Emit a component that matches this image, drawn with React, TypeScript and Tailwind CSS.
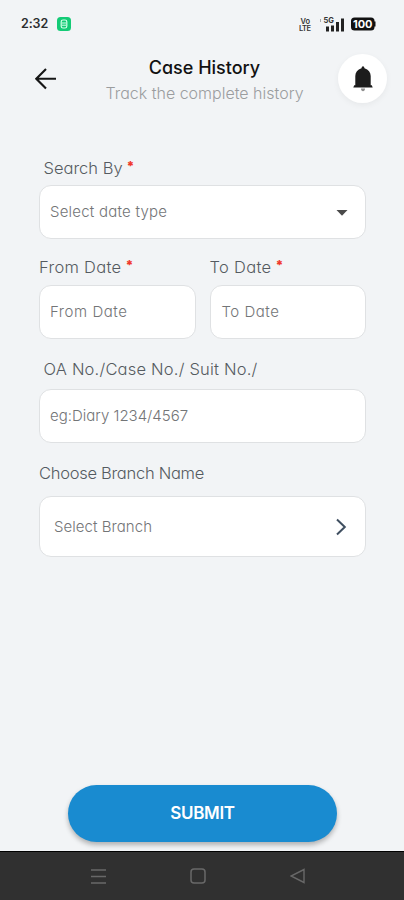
import type { ReactNode } from "react";

function Label({ children, className = "", required }: { children: ReactNode; className?: string; required?: boolean }) {
  return (
    <div className={`flex h-6 text-[16.5px] leading-6 font-[350] whitespace-nowrap text-[#555b61] ${className}`}>
      {children}
      {required && <span className="ml-[4px] text-[13px] leading-[21px] font-black tracking-normal text-[#f03a2e]">*</span>}
    </div>
  );
}

function Field({ children, className = "" }: { children: ReactNode; className?: string }) {
  return (
    <div
      className={`flex items-center justify-between rounded-xl border border-[#dfe1e3] bg-white pt-px text-[15px] font-light whitespace-nowrap text-[#737577] ${className}`}
    >
      {children}
    </div>
  );
}

function StatusBar() {
  return (
    <div className="flex h-12 shrink-0 items-center pl-[21px] pr-[28px]">
      <span className="text-[12.5px] font-semibold tracking-[-0.1px] text-[#2b2d2f]">2:32</span>
      <svg className="ml-[9px]" width="14" height="14" viewBox="0 0 14 14" fill="none">
        <rect width="14" height="14" rx="3.5" fill="#14cb76" />
        <rect x="4.2" y="3" width="5.6" height="8" rx="1.8" stroke="#d5ffe9" strokeWidth="1.2" />
        <path d="M5 6h4M5 8.2h4" stroke="#d5ffe9" strokeWidth="1" />
      </svg>
      <div className="ml-auto flex items-center">
        <svg className="mr-[8px]" width="13" height="15" viewBox="0 0 13 15" fill="#333" fontWeight="600">
          <text x="1.5" y="6.5" fontSize="7.5">Vo</text>
          <text x="0" y="14" fontSize="7.5" textLength="12">LTE</text>
        </svg>
        <svg className="mr-[6px]" width="25" height="15" viewBox="0 0 25 15">
          <path d="M0 2h1v3H0z" fill="#aaa" />
          <text x="3.5" y="6" fontSize="7.5" fontWeight="700" fill="#333">5G</text>
          <path d="M6 9.5h3v5H6zM11 8.5h3v6h-3zM16 5h3v9.500h-3zM21 1.500h3v13h-3z" fill="#222" />
        </svg>
        <svg width="25" height="14" viewBox="0 0 25 14">
          <rect y="0.5" width="23.5" height="13" rx="3.5" fill="#111" />
          <path d="M23 4.500h1.500v5H23z" fill="#111" />
          <text x="2" y="11" fontSize="11" fontWeight="700" fill="#fff" textLength="19.5">100</text>
        </svg>
      </div>
    </div>
  );
}

function Header() {
  return (
    <header className="flex h-[62px] shrink-0 items-start pl-[35px] pr-[17px]">
      <svg className="mt-[20px]" width="22" height="22" viewBox="0 0 22 22" fill="none" stroke="#161616" strokeWidth="2.1">
        <path d="M21 10.8H1.5M11 1L1.3 10.8L11 20.5" />
      </svg>
      <div className="flex-1 pt-[8px] pl-[14px] text-center whitespace-nowrap">
        <h1 className="text-[18px] leading-6 font-medium text-[#111]">Case History</h1>
        <p className="mt-px text-[16px] leading-6 font-light text-[#9b9d9f]">Track the complete history</p>
      </div>
      <div className="mt-[6px] flex size-[49px] items-center justify-center rounded-full bg-white shadow-[0_2px_6px_rgba(0,0,0,0.05)]">
        <svg width="22" height="26" viewBox="0 0 22 26" fill="#1c1c1c">
          <path d="M11 .3c.8 0 1.300.700 1.500 2C16.500 3.800 18.700 6.300 18.700 10v9.300h1.100l.9 2.200H1.300l.9-2.200h1.100V10c0-3.700 2.200-6.200 6.200-7.700C9.700 1 10.200.3 11 .3z" />
          <path d="M9 22.500h4c0 1.800-.8 2.700-2 2.700s-2-.9-2-2.700z" fill="#909090" />
        </svg>
      </div>
    </header>
  );
}

export default function App() {
  return (
    <div className="flex h-[900px] w-[404px] flex-col overflow-hidden bg-[#f2f4f6] font-['Inter',sans-serif] [font-feature-settings:'cv11']">
      <StatusBar />
      <Header />

      <main className="flex flex-1 flex-col pt-[46px] pr-[38px] pl-[39px]">
        <Label className="pl-[4.5px]" required>Search By</Label>
        <Field className="mt-[5px] h-[54px] pr-[17px] pl-[10px]">
          <span className="tracking-[0.22px]">Select date type</span>
          <svg width="12" height="6" viewBox="0 0 12 6" fill="#4a4a4a">
            <path d="M.5 0h11L6 5.7z" />
          </svg>
        </Field>

        <div className="mt-[16px] grid grid-cols-2 gap-x-[14px]">
          <div>
            <Label className="tracking-[0.3px]" required>From Date</Label>
            <Field className="mt-[6px] h-[54px] pl-[10px]">
              <span className="tracking-[0.55px]">From Date</span>
            </Field>
          </div>
          <div>
            <Label className="tracking-[0.3px]" required>To Date</Label>
            <Field className="mt-[6px] h-[54px] pl-[11px]">
              <span className="tracking-[0.5px]">To Date</span>
            </Field>
          </div>
        </div>

        <Label className="mt-[18px] pl-[4.5px] tracking-[0.2px]">OA No./Case No./ Suit No./</Label>
        <Field className="mt-[8px] h-[54px] pl-[10px]">
          <span>eg:Diary 1234/4567</span>
        </Field>

        <Label className="mt-[18px] tracking-[-0.28px]">Choose Branch Name</Label>
        <Field className="mt-[11px] h-[61px] pr-[18px] pl-[14px]">
          <span className="tracking-[0.05px]">Select Branch</span>
          <svg className="-mt-px" width="12" height="18" viewBox="0 0 12 18" fill="none" stroke="#3f4f60" strokeWidth="2">
            <path d="M2 1.5L9.8 9L2 16.5" />
          </svg>
        </Field>
      </main>

      <button className="mb-[9px] ml-[68px] h-[57px] w-[269px] shrink-0 rounded-full bg-[#198bd0] text-[17px] font-semibold tracking-[-0.35px] text-white shadow-[0_3px_5px_rgba(0,0,0,0.28)]">
        SUBMIT
      </button>

      <nav className="flex h-[49px] shrink-0 items-center border-t border-black bg-[#303030] pl-[91px]">
        <svg width="15" height="15" viewBox="0 0 15 15" fill="none" stroke="#686868" strokeWidth="1.6">
          <path d="M0 1h15M0 7.5h15M0 14h15" />
        </svg>
        <svg className="ml-[84px]" width="16" height="16" viewBox="0 0 16 16" fill="none" stroke="#686868" strokeWidth="1.5">
          <rect x="1" y="1" width="14" height="14" rx="3" />
        </svg>
        <svg className="ml-[84px]" width="15" height="16" viewBox="0 0 15 16" fill="none" stroke="#686868" strokeWidth="1.4">
          <path d="M14 1.5v13L1 8z" />
        </svg>
      </nav>
    </div>
  );
}
